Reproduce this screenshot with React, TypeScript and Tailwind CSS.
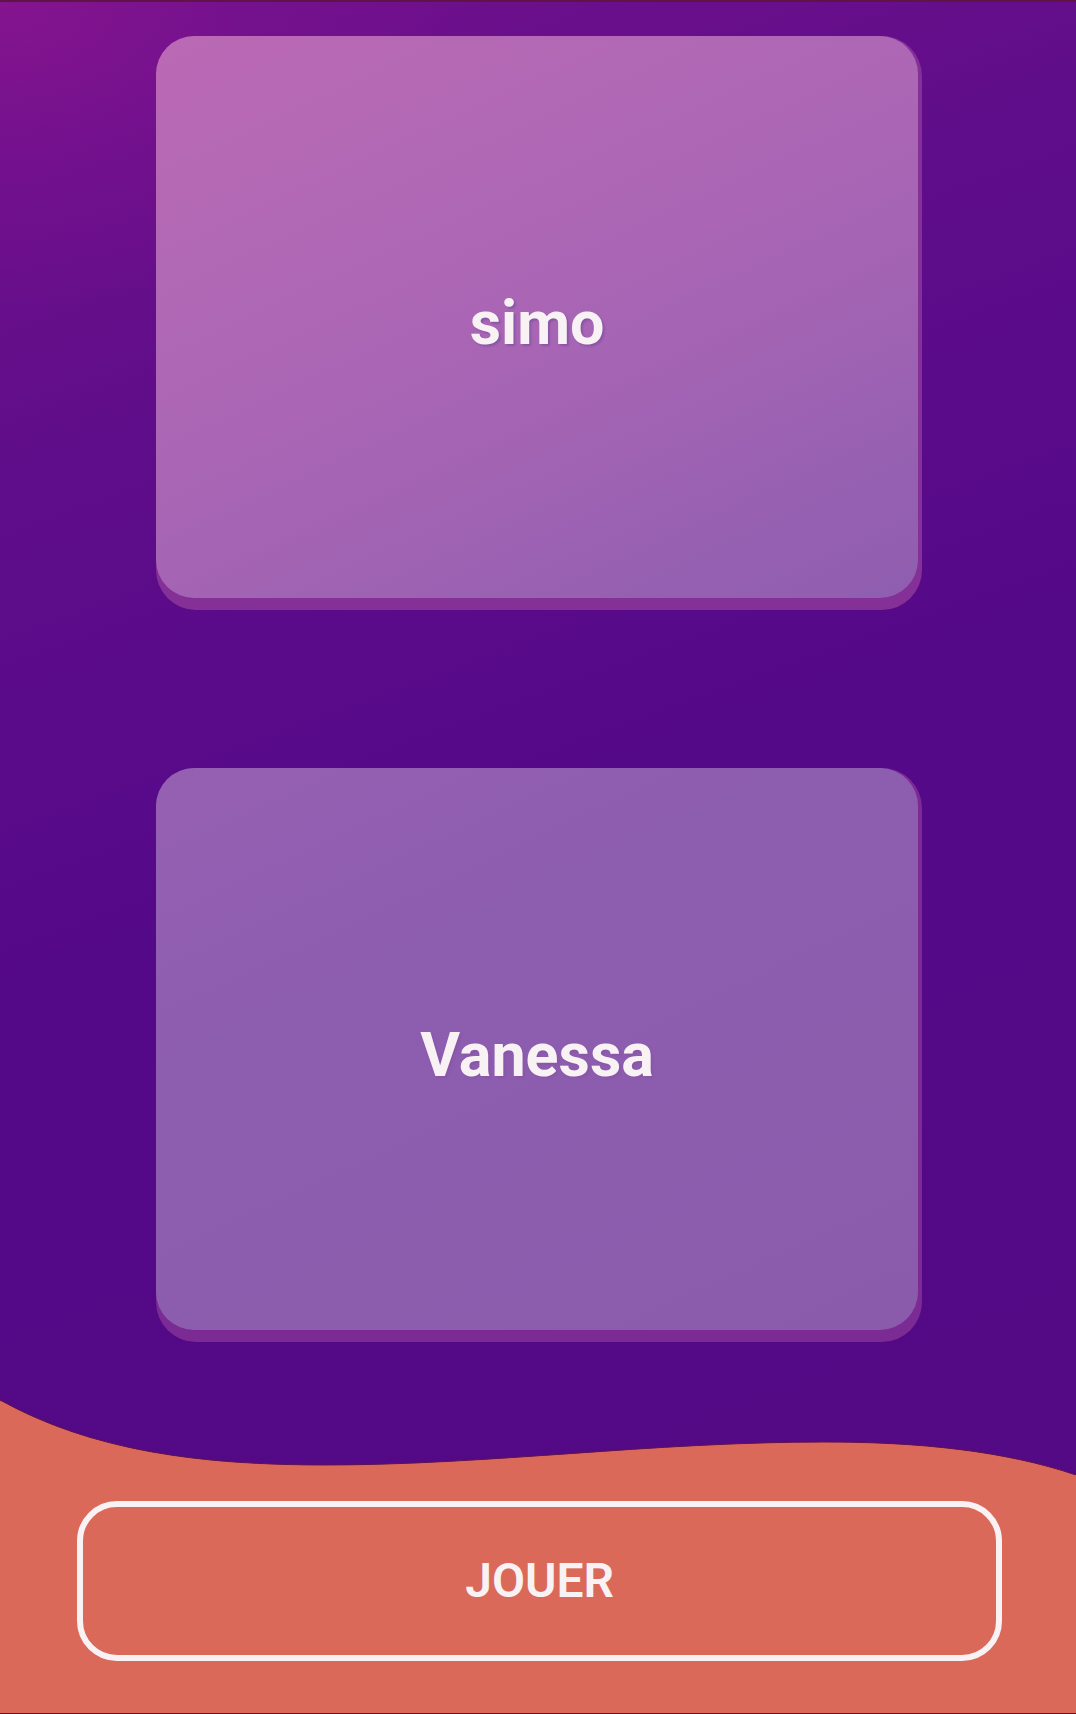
const players = [
  {
    name: 'simo',
    surface: 'bg-[linear-gradient(155deg,#bb69b4_0%,#b068b5_30%,#a564b4_60%,#9660b1_85%,#8f5eb0_100%)]',
    edge: 'bg-[#853096]',
  },
  {
    name: 'Vanessa',
    surface: 'bg-[linear-gradient(155deg,#9660b2_0%,#8d5db0_35%,#8b5bab_100%)]',
    edge: 'bg-[#7b2b93]',
  },
];

function PlayerCard({ name, surface, edge }: { name: string; surface: string; edge: string }) {
  return (
    <button
      type="button"
      className={`flex min-h-[574px] w-full rounded-[40px] pr-1 pb-3 ${edge}`}
    >
      <span
        className={`flex min-h-[562px] grow items-center justify-center rounded-[38px] pt-3 text-[61px] leading-none font-bold text-[#f8f2f5] [text-shadow:2px_2px_2px_#8a56a6] ${surface}`}
      >
        {name}
      </span>
    </button>
  );
}

export default function App() {
  return (
    <div className="flex min-h-screen flex-col border-t-2 border-[#601347] bg-[#520a88] bg-[radial-gradient(ellipse_45%_18%_at_0%_0%,#89158fcc_0%,#7a128e80_50%,transparent_100%),linear-gradient(160deg,#74118d_0%,#600d8a_22%,#540989_48%,#530a82_100%)] font-[Roboto,sans-serif]">
      <main className="flex flex-col gap-[158px] pt-[34px] pr-[14.3%] pb-[58px] pl-[14.5%]">
        {players.map((player) => (
          <PlayerCard key={player.name} {...player} />
        ))}
      </main>
      <footer className="flex grow flex-col">
        <svg
          aria-hidden="true"
          className="block h-[75px] w-full"
          viewBox="0 0 1076 75"
          preserveAspectRatio="none"
        >
          <path
            d="M0 0C92 51 200 65 325 65C490 65 650 42 825 42C920 42 1005 51 1076 75V76H0Z"
            fill="#db6959"
            stroke="#601247"
            strokeWidth="1"
          />
          <path
            d="M0 1C92 52 200 66 325 66C490 66 650 43 825 43C920 43 1005 52 1076 76H0Z"
            fill="#db6959"
          />
        </svg>
        <div className="grow border-b border-[#601247] bg-[#db6959] pt-[26px] pr-[6.9%] pb-[50px] pl-[7.2%]">
          <button
            type="button"
            className="flex min-h-[160px] w-full items-center justify-center rounded-[40px] border-6 border-[#f8f2f5] text-5xl font-semibold text-[#f8f2f5]"
          >
            JOUER
          </button>
        </div>
      </footer>
    </div>
  );
}
